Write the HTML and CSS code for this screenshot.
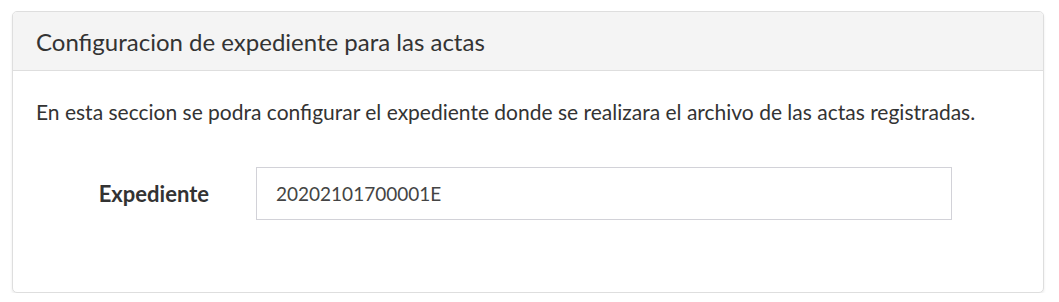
FILE: index.html
```html
<!DOCTYPE html>
<html lang="es">
<head>
<meta charset="utf-8">
<title>Configuracion de expediente</title>
<link rel="stylesheet" href="styles.css">
</head>
<body>
<div class="card">
  <div class="card-header">Configuracion de expediente para las actas</div>
  <div class="card-body">
    <p class="intro">En esta seccion se podra configurar el expediente donde se realizara el archivo de las actas registradas.</p>
    <div class="form-row">
      <label class="label" for="exp">Expediente</label>
      <input class="input" id="exp" type="text" value="20202101700001E">
    </div>
  </div>
</div>
</body>
</html>
```

FILE: styles.css
```css
html, body {
  margin: 0;
  padding: 0;
  background: #ffffff;
}
body {
  padding: 11px 15px 0 12px;
  font-family: Lato, "Open Sans", sans-serif;
  color: #333333;
}
.card {
  border: 1px solid #dedede;
  border-radius: 5px;
  box-shadow: 0 2px 3px rgba(0,0,0,0.08);
  height: 282px;
  box-sizing: border-box;
  overflow: hidden;
  background: #fff;
}
.card-header {
  background: #f4f4f4;
  border-bottom: 1px solid #dedede;
  height: 59px;
  box-sizing: border-box;
  padding: 0 23px;
  display: flex;
  align-items: center;
  font-size: 24px;
  color: #333;
}
.card-body {
  padding: 0 23px;
}
.intro {
  margin: 26px 0 0;
  font-size: 21px;
  line-height: 30px;
}
.form-row {
  display: flex;
  align-items: center;
  margin-top: 40px;
}
.label {
  width: 220px;
  box-sizing: border-box;
  padding-right: 47px;
  text-align: right;
  font-weight: bold;
  font-size: 22px;
}
.input {
  width: 696px;
  height: 53px;
  box-sizing: border-box;
  border: 1px solid #d2d2d8;
  border-radius: 0;
  padding: 0 19px;
  font-family: inherit;
  font-size: 19px;
  color: #444;
  margin: 0;
  outline: none;
}
```
